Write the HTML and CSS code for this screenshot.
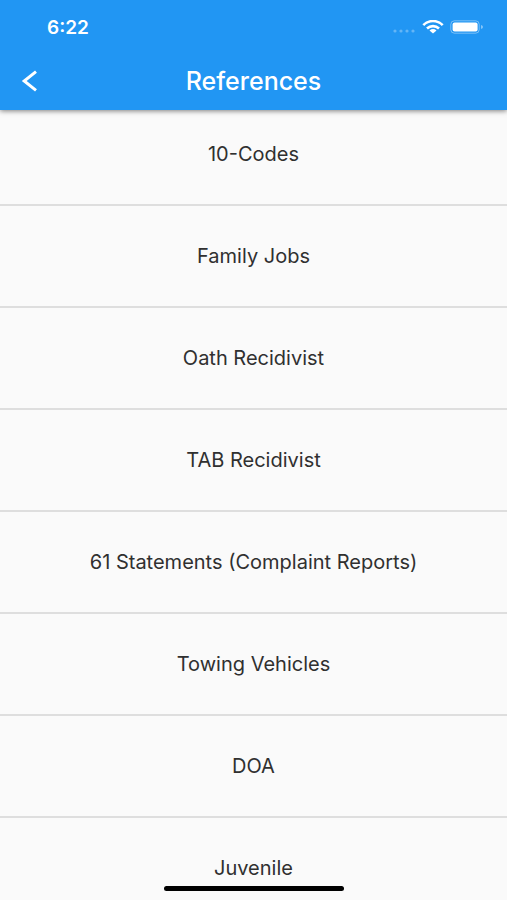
FILE: index.html
```html
<!DOCTYPE html>
<html lang="en">
<head>
<meta charset="utf-8">
<meta name="viewport" content="width=device-width, initial-scale=1">
<title>References</title>
<link rel="stylesheet" href="styles.css">
</head>
<body>
<div class="screen">
  <header class="app-header">
    <div class="status-bar">
      <span class="time">6:22</span>
      <div class="status-icons">
        <svg class="signal" width="24" height="6" viewBox="0 0 24 6" aria-hidden="true">
          <g fill="#fff" opacity=".3"><circle cx="3" cy="3" r="1.6"/><circle cx="9" cy="3" r="1.6"/><circle cx="15" cy="3" r="1.6"/><circle cx="21" cy="3" r="1.6"/></g>
        </svg>
        <svg width="22" height="14" viewBox="0 0 22 14" aria-hidden="true">
          <g fill="none" stroke="#fff" stroke-width="2.6"><path d="M1.3 5.1C6.7-.3 15.3-.3 20.7 5.1"/><path d="M5 8.5C8.4 5.3 13.6 5.3 17 8.5"/></g>
          <path d="M7.5 10.4Q11 7.8 14.5 10.4L11 13.4Z" fill="#fff"/>
        </svg>
        <svg width="34" height="14" viewBox="0 0 34 14" aria-hidden="true">
          <rect x=".8" y=".8" width="28.4" height="12.4" rx="3.6" fill="none" stroke="#fff" stroke-opacity=".4"/>
          <rect x="2.6" y="2.6" width="25" height="8.8" rx="2" fill="#fff"/>
          <path d="M31 5Q33 5.6 33 7T31 9Z" fill="#fff" fill-opacity=".45"/>
        </svg>
      </div>
    </div>
    <div class="toolbar">
      <button class="back" type="button" aria-label="Back">
        <svg width="16" height="22" viewBox="0 0 16 22" aria-hidden="true"><path d="M15 1.6L3.2 11L15 20.4" fill="none" stroke="#fff" stroke-width="3"/></svg>
      </button>
      <h1>References</h1>
    </div>
  </header>
  <main>
    <ul class="list">
      <li><a href="#codes">10-Codes</a></li>
      <li><a href="#family">Family Jobs</a></li>
      <li><a href="#oath">Oath Recidivist</a></li>
      <li><a href="#tab">TAB Recidivist</a></li>
      <li><a href="#statements">61 Statements (Complaint Reports)</a></li>
      <li><a href="#towing">Towing Vehicles</a></li>
      <li><a href="#doa">DOA</a></li>
      <li><a href="#juvenile">Juvenile</a></li>
    </ul>
  </main>
  <div class="home-indicator"></div>
</div>
</body>
</html>
```
FILE: styles.css
```css
* {
  box-sizing: border-box;
}

body {
  margin: 0;
  background: #fafafa;
  color: #303030;
  font-family: Inter, "Liberation Sans", sans-serif;
}

.screen {
  height: 100vh;
  overflow: hidden;
}

.app-header {
  position: relative;
  z-index: 1;
  padding-bottom: 2px;
  background: #2196f3;
  color: #fff;
  box-shadow: 0 1px 5px rgba(0, 0, 0, .5);
}

.status-bar {
  display: flex;
  align-items: center;
  justify-content: space-between;
  height: 54px;
  padding: 0 23px 0 47px;
}

.time {
  font-size: 19px;
  font-weight: 600;
}

.status-icons {
  display: flex;
  align-items: center;
  gap: 6px;
}

.signal {
  margin-top: 8px;
}

.toolbar {
  display: grid;
  grid-template-columns: 48px 1fr 48px;
  align-items: center;
  height: 54px;
  padding: 0 8px;
}

.back {
  display: flex;
  align-items: center;
  height: 48px;
  padding: 0 13px;
  border: 0;
  background: none;
}

h1 {
  margin: 0;
  font-size: 25px;
  font-weight: 500;
  line-height: 28px;
  text-align: center;
}

.list {
  margin: -6px 0 0;
  padding: 0;
  list-style: none;
}

.list a {
  display: block;
  padding: 38px 16px;
  border-bottom: 2px solid #dedede;
  color: inherit;
  font-size: 20px;
  line-height: 24px;
  text-align: center;
  text-decoration: none;
}

.home-indicator {
  position: fixed;
  bottom: 9px;
  left: 50%;
  z-index: 2;
  width: 180px;
  height: 5px;
  margin-left: -90px;
  border-radius: 3px;
  background: #000;
}
```
